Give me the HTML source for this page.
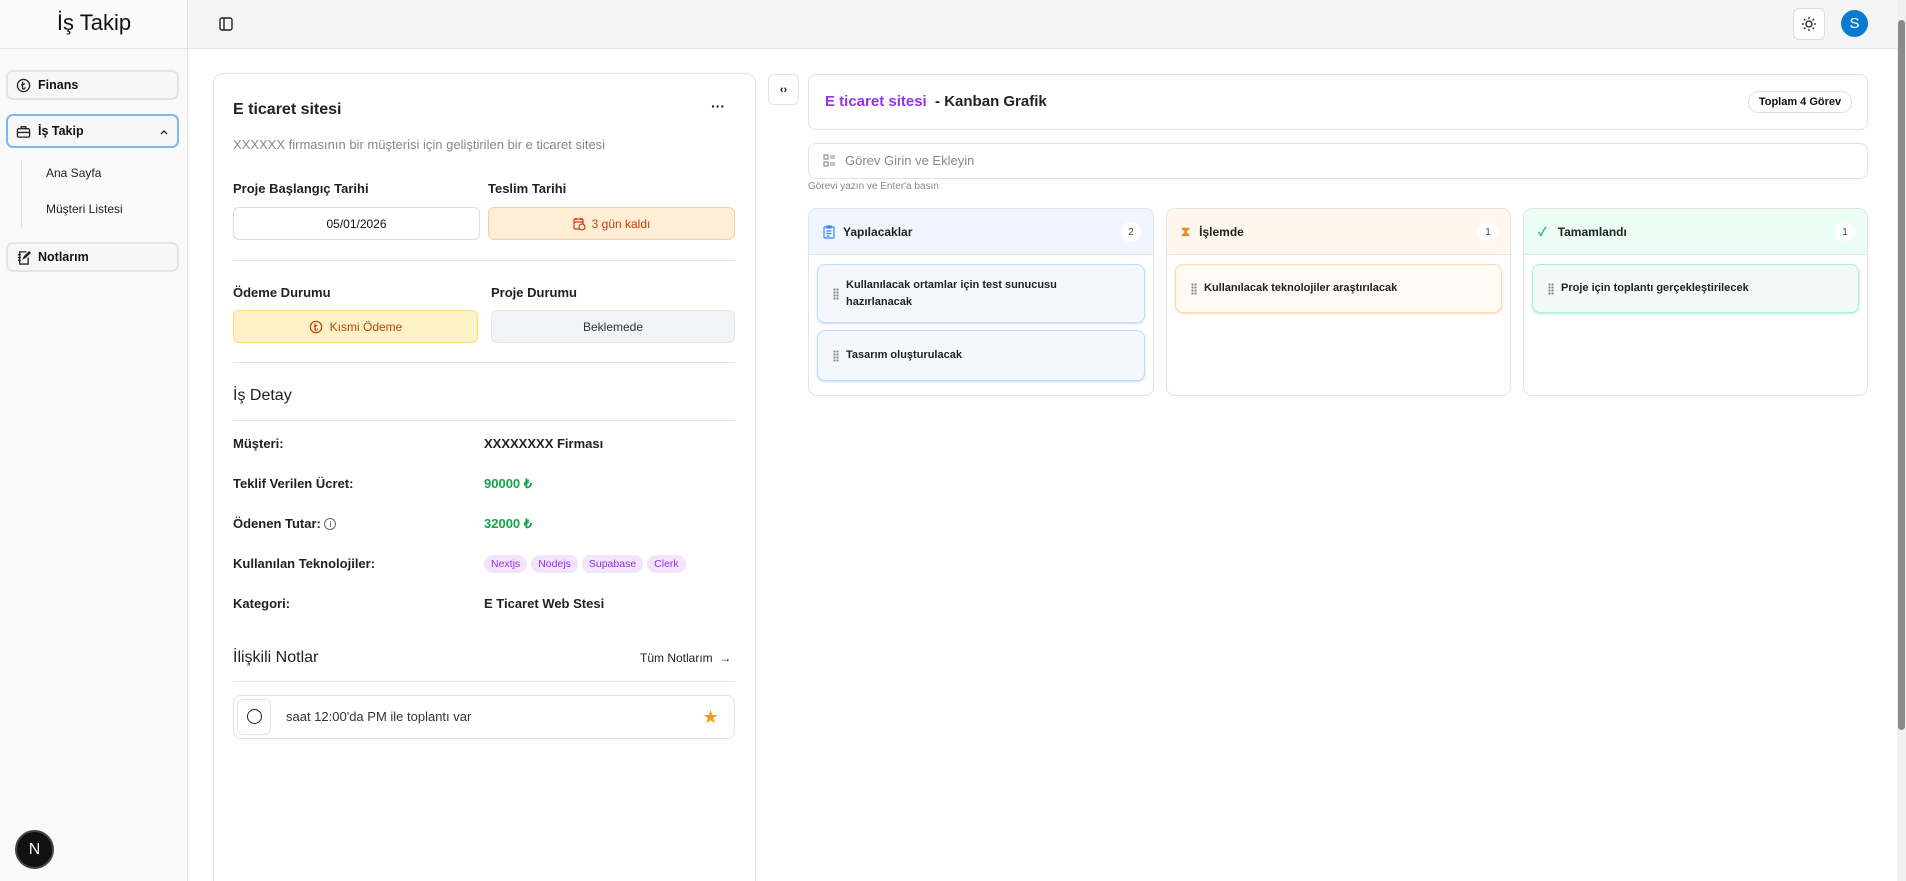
<!DOCTYPE html>
<html style="height:881px;overflow:hidden"><head><meta charset="utf-8"><style>
*{box-sizing:border-box;margin:0;padding:0}
body{width:1906px;height:881px;overflow:hidden;background:#fff;font-family:"Liberation Sans","Noto Sans CJK JP",sans-serif;color:#111;position:relative}
.a{position:absolute}
.side{left:0;top:0;width:188px;height:881px;background:#fafafa;border-right:1px solid #e5e5e5}
.top{left:188px;top:0;right:0;height:49px;background:#f5f5f5;border-bottom:1px solid #e5e5e5}
.nb{left:6px;width:173px;height:30px;border:2px solid #e4e4e4;border-radius:7px;background:#f7f7f7;font-size:12.5px;font-weight:bold;display:flex;align-items:center;padding-left:30px}
.nb svg{position:absolute;left:8px;top:6px}
.lbl{font-size:13px;font-weight:bold;color:#222}
.row{font-size:13px;font-weight:bold;color:#222}
.hr{height:1px;background:#e3e3e3}
.tag{display:inline-block;background:#f3e3fd;color:#9333ea;font-size:10.5px;padding:3px 7px;border-radius:10px;margin-right:4px}
.col{top:208px;height:188px;border:1px solid #e3e3e3;border-radius:9px;overflow:hidden}
.ch{height:46px;border-bottom:1px solid #e5e5e5;display:flex;align-items:center;padding-left:14px;font-size:12px;font-weight:bold;color:#222;position:relative}
.cnt{position:absolute;right:12px;top:13px;width:20px;height:20px;border-radius:10px;background:#fff;font-size:10px;font-weight:normal;display:flex;align-items:center;justify-content:center;color:#444}
.card{left:8px;right:8px;border-radius:8px;font-size:11px;font-weight:bold;color:#222;display:flex;align-items:center;padding-left:28px;line-height:17px}
.dots{position:absolute;left:15px;top:50%;margin-top:-6px;width:6px;height:12px;background:radial-gradient(circle,#888 1px,transparent 1.3px) 0 0/3px 3px}
</style></head><body>
<div class="a side"></div>
<div class="a" style="left:0;top:48px;width:188px;height:1px;background:#e5e5e5"></div>
<div class="a" style="left:0;top:10px;width:188px;text-align:center;font-size:22px;color:#111">İş Takip</div>
<div class="a top"></div>
<svg class="a" style="left:219px;top:17px" width="14" height="14" viewBox="0 0 14 14" fill="none" stroke="#222" stroke-width="1.4"><rect x="1" y="1" width="12" height="12" rx="2"/><line x1="5" y1="1" x2="5" y2="13"/></svg>
<div class="a" style="left:1793px;top:8px;width:32px;height:32px;border:1px solid #ddd;border-radius:6px;background:#fff"></div>
<svg class="a" style="left:1801px;top:16px" width="16" height="16" viewBox="0 0 16 16" fill="none" stroke="#222" stroke-width="1.3"><circle cx="8" cy="8" r="3"/><path d="M8 1v2M8 13v2M1 8h2M13 8h2M3 3l1.4 1.4M11.6 11.6L13 13M3 13l1.4-1.4M11.6 4.4L13 3"/></svg>
<div class="a" style="left:1841px;top:10px;width:27px;height:27px;border-radius:50%;background:#0a7ad2;color:#fff;font-size:15px;display:flex;align-items:center;justify-content:center">S</div>
<div class="a" style="left:1897px;top:0;width:9px;height:881px;background:#f0f0f0"></div>
<div class="a" style="left:1898px;top:20px;width:7px;height:710px;background:#8a8a8a;border-radius:4px"></div>

<div class="a nb" style="top:70px"><svg width="15" height="15" viewBox="0 0 16 16" fill="none" stroke="#222" stroke-width="1.4"><circle cx="8" cy="8" r="6.5"/><path d="M7 4v7c0 1 2 1 3-1M5.5 7.5l4-1.5"/></svg>Finans</div>
<div class="a nb" style="top:114px;height:34px;border-color:#7cb8f2;background:#f7f7f7"><svg width="15" height="15" viewBox="0 0 16 16" fill="none" stroke="#222" stroke-width="1.4" style="top:8px"><rect x="1.5" y="5" width="13" height="9" rx="1.5"/><path d="M5.5 5V3h5v2M1.5 9h13"/></svg>İş Takip<svg width="12" height="12" viewBox="0 0 12 12" fill="none" stroke="#222" stroke-width="1.3" style="left:150px;top:10px"><path d="M3 8l3-3 3 3"/></svg></div>
<div class="a" style="left:21px;top:160px;width:1px;height:68px;background:#e3e3e3"></div>
<div class="a" style="left:46px;top:166px;font-size:12px;color:#222">Ana Sayfa</div>
<div class="a" style="left:46px;top:202px;font-size:12px;color:#222">Müşteri Listesi</div>
<div class="a nb" style="top:242px"><svg width="15" height="15" viewBox="0 0 16 16" fill="none" stroke="#222" stroke-width="1.4"><path d="M11 2H4v13h9V8M2 5h3M2 8h3M2 11h3M14 2l-5 5-1 2 2-1 5-5z"/></svg>Notlarım</div>

<div class="a" style="left:15px;top:830px;width:39px;height:39px;border-radius:50%;background:#111;border:2px solid #444;color:#fff;font-size:16px;display:flex;align-items:center;justify-content:center">N</div>

<!-- left card -->
<div class="a" style="left:213px;top:73px;width:543px;height:808px;border:1px solid #e3e3e3;border-bottom:none;border-radius:10px 10px 0 0"></div>
<div class="a" style="left:233px;top:101px;font-size:16px;font-weight:bold;color:#222">E ticaret sitesi</div>
<div class="a" style="left:711px;top:98px;font-size:14px;font-weight:bold">···</div>
<div class="a" style="left:233px;top:137px;font-size:13px;color:#888">XXXXXX firmasının bir müşterisi için geliştirilen bir e ticaret sitesi</div>
<div class="a lbl" style="left:233px;top:181px">Proje Başlangıç Tarihi</div>
<div class="a lbl" style="left:488px;top:181px">Teslim Tarihi</div>
<div class="a" style="left:233px;top:207px;width:247px;height:33px;border:1px solid #ddd;border-radius:6px;font-size:12px;display:flex;align-items:center;justify-content:center">05/01/2026</div>
<div class="a" style="left:488px;top:207px;width:247px;height:33px;border:1px solid #fbcf9d;background:#ffedd5;border-radius:6px;font-size:12px;color:#c2410c;display:flex;align-items:center;justify-content:center"><svg width="13" height="14" viewBox="0 0 13 14" fill="none" stroke="#c2410c" stroke-width="1.2" style="margin-right:6px"><rect x="1" y="2" width="9" height="10" rx="1"/><path d="M3 1v2M8 1v2M1 5h9"/><circle cx="9" cy="10" r="3" fill="#ffedd5"/></svg>3 gün kaldı</div>
<div class="a hr" style="left:233px;top:260px;width:502px"></div>
<div class="a lbl" style="left:233px;top:285px">Ödeme Durumu</div>
<div class="a lbl" style="left:491px;top:285px">Proje Durumu</div>
<div class="a" style="left:233px;top:310px;width:245px;height:33px;border:1px solid #fcd980;background:#fef3c7;border-radius:6px;font-size:12px;color:#c2410c;display:flex;align-items:center;justify-content:center"><svg width="14" height="14" viewBox="0 0 16 16" fill="none" stroke="#c2410c" stroke-width="1.4" style="margin-right:7px"><circle cx="8" cy="8" r="6.5"/><path d="M7 4v7c0 1 2 1 3-1M5.5 7.5l4-1.5"/></svg>Kısmi Ödeme</div>
<div class="a" style="left:491px;top:310px;width:244px;height:33px;border:1px solid #e2e6ec;background:#f1f3f6;border-radius:6px;font-size:12px;color:#333;display:flex;align-items:center;justify-content:center">Beklemede</div>
<div class="a hr" style="left:233px;top:362px;width:502px"></div>
<div class="a" style="left:233px;top:387px;font-size:16px;color:#222">İş Detay</div>
<div class="a hr" style="left:233px;top:420px;width:502px"></div>
<div class="a row" style="left:233px;top:436px">Müşteri:</div><div class="a row" style="left:484px;top:436px">XXXXXXXX Firması</div>
<div class="a row" style="left:233px;top:476px">Teklif Verilen Ücret:</div><div class="a row" style="left:484px;top:476px;color:#16a34a">90000 ₺</div>
<div class="a row" style="left:233px;top:516px">Ödenen Tutar: <span style="display:inline-block;width:12px;height:12px;border:1px solid #666;border-radius:50%;font-size:8px;text-align:center;line-height:11px;font-weight:normal;vertical-align:1px">i</span></div><div class="a row" style="left:484px;top:516px;color:#16a34a">32000 ₺</div>
<div class="a row" style="left:233px;top:556px">Kullanılan Teknolojiler:</div>
<div class="a" style="left:484px;top:554px"><span class="tag">Nextjs</span><span class="tag">Nodejs</span><span class="tag">Supabase</span><span class="tag">Clerk</span></div>
<div class="a row" style="left:233px;top:596px">Kategori:</div><div class="a row" style="left:484px;top:596px">E Ticaret Web Stesi</div>
<div class="a" style="left:233px;top:649px;font-size:16px;color:#222">İlişkili Notlar</div>
<div class="a" style="left:640px;top:651px;font-size:12px;color:#222">Tüm Notlarım &nbsp;→</div>
<div class="a hr" style="left:233px;top:681px;width:502px"></div>
<div class="a" style="left:233px;top:695px;width:502px;height:44px;border:1px solid #e3e3e3;border-radius:8px"></div>
<div class="a" style="left:237px;top:699px;width:34px;height:36px;border:1px solid #e3e3e3;border-radius:6px"></div>
<div class="a" style="left:247px;top:709px;width:15px;height:15px;border:1.5px solid #222;border-radius:50%"></div>
<div class="a" style="left:286px;top:709px;font-size:13px;color:#333">saat 12:00'da PM ile toplantı var</div>
<div class="a" style="left:703px;top:706px;font-size:15px;color:#f59e0b">★</div>

<!-- right -->
<div class="a" style="left:768px;top:74px;width:31px;height:31px;border:1px solid #e3e3e3;border-radius:6px;font-size:11px;display:flex;align-items:center;justify-content:center;font-weight:bold">‹›</div>
<div class="a" style="left:808px;top:74px;width:1060px;height:56px;border:1px solid #e3e3e3;border-radius:8px"></div>
<div class="a" style="left:825px;top:93px;font-size:15px;font-weight:bold;color:#9333ea">E ticaret sitesi <span style="color:#222">&nbsp;- Kanban Grafik</span></div>
<div class="a" style="left:1748px;top:91px;width:104px;height:22px;border:1px solid #ddd;border-radius:11px;font-size:11px;font-weight:bold;display:flex;align-items:center;justify-content:center">Toplam 4 Görev</div>
<div class="a" style="left:808px;top:143px;width:1060px;height:36px;border:1px solid #e3e3e3;border-radius:8px"></div>
<svg class="a" style="left:823px;top:154px" width="13" height="13" viewBox="0 0 13 13" fill="none" stroke="#888" stroke-width="1.1"><rect x="1" y="1" width="4" height="4"/><rect x="1" y="8" width="4" height="4"/><path d="M7 2h5M7 4h5M7 9h5M7 11h5"/></svg>
<div class="a" style="left:845px;top:153px;font-size:13px;color:#888">Görev Girin ve Ekleyin</div>
<div class="a" style="left:808px;top:181px;font-size:10px;color:#888">Görevi yazın ve Enter'a basın</div>

<div class="a col" style="left:808px;width:346px"><div class="ch" style="background:#eff6ff"><svg width="12" height="14" viewBox="0 0 12 14" fill="none" stroke="#3b82f6" stroke-width="1.2" style="margin-right:8px"><rect x="1" y="2" width="10" height="11" rx="1"/><rect x="4" y="1" width="4" height="2"/><path d="M3.5 6h5M3.5 8.5h5M3.5 11h3"/></svg>Yapılacaklar<div class="cnt">2</div></div>
<div class="a card" style="top:55px;height:59px;background:#f4f8fe;border:1px solid #bfdbfe;box-shadow:0 1px 2px #c9dbf5"><div class="dots"></div>Kullanılacak ortamlar için test sunucusu<br>hazırlanacak</div>
<div class="a card" style="top:121px;height:51px;background:#f4f8fe;border:1px solid #bfdbfe;box-shadow:0 1px 2px #c9dbf5"><div class="dots"></div>Tasarım oluşturulacak</div></div>

<div class="a col" style="left:1166px;width:345px"><div class="ch" style="background:#fff7ed"><span style="color:#ea8a2a;margin-right:9px;font-size:13px">⧗</span>İşlemde<div class="cnt">1</div></div>
<div class="a card" style="top:55px;height:49px;background:#fffaf3;border:1px solid #fed7aa;box-shadow:0 1px 2px #f7dcbc"><div class="dots"></div>Kullanılacak teknolojiler araştırılacak</div></div>

<div class="a col" style="left:1523px;width:345px"><div class="ch" style="background:#ecfdf5"><span style="color:#10b981;margin-right:11px;font-size:12px">✓</span>Tamamlandı<div class="cnt">1</div></div>
<div class="a card" style="top:55px;height:49px;background:#f2fbf8;border:1px solid #a7f3d0;box-shadow:0 1px 2px #b9ead8"><div class="dots"></div>Proje için toplantı gerçekleştirilecek</div></div>
</body></html>
